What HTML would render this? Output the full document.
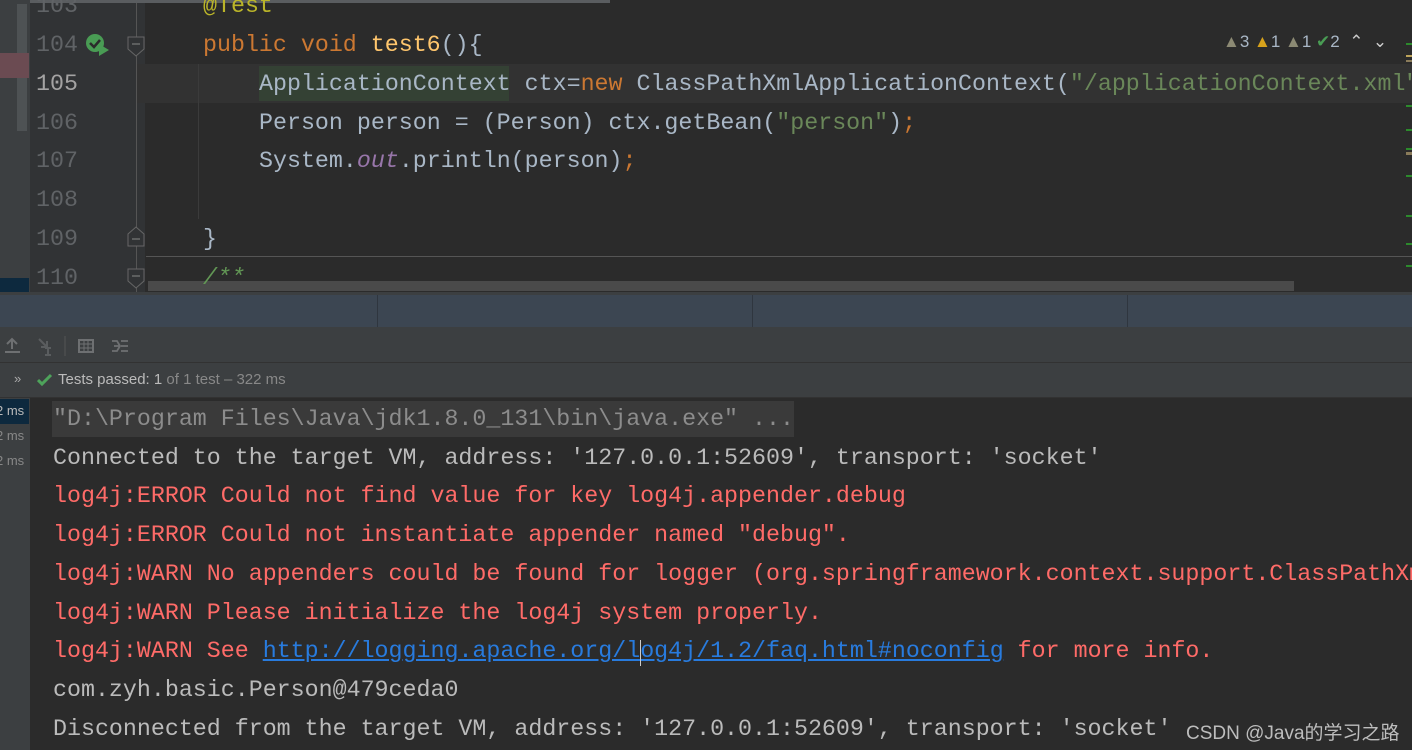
<!DOCTYPE html>
<html><head><meta charset="utf-8"><style>
*{margin:0;padding:0;box-sizing:border-box}
html,body{width:1412px;height:750px;overflow:hidden}
body{background:#2b2b2b;position:relative;font-family:"Liberation Mono",monospace;font-size:23.3px}
#w{position:absolute;left:0;top:0;width:1412px;height:750px;overflow:hidden}
.a{position:absolute;white-space:pre}
.ln{color:#606366;left:36px}
.k{color:#cc7832}.s{color:#6a8759}.t{color:#a9b7c6}.o{color:#9876aa;font-style:italic}.an{color:#bbb529}.c{color:#629755;font-style:italic}
.r{color:#ff6b68}.g{color:#bbbbbb}.u{color:#287bde;text-decoration:underline}
.ui{font-family:"Liberation Sans",sans-serif}
.clip{overflow:hidden;right:0}
</style></head><body><div id="w">
<!-- editor -->
<div class="a" style="left:0;top:0;width:30px;height:292px;background:#3c3f41"></div>
<div class="a" style="left:17px;top:4px;width:10px;height:127px;background:#4e5254"></div>
<div class="a" style="left:0;top:53px;width:29px;height:25px;background:#6b4b52"></div>
<div class="a" style="left:0;top:278px;width:29px;height:14px;background:#0d293e"></div>
<div class="a" style="left:30px;top:0;width:115px;height:292px;background:#313335"></div>
<div class="a" style="left:136px;top:0;width:1px;height:292px;background:#555"></div>
<div class="a" style="left:137px;top:64px;width:1275px;height:39px;background:#323232"></div>
<div class="a" style="left:259px;top:66px;width:250px;height:35px;background:#344134"></div>
<div class="a" style="left:198px;top:64px;width:1px;height:155px;background:#3b3b3b"></div>
<div class="a" style="left:146px;top:256px;width:1266px;height:1px;background:#555"></div>
<div class="a" style="left:148px;top:281px;width:1146px;height:10px;background:#4a4a4a"></div>
<div class="a" style="left:30px;top:0;width:580px;height:3px;background:#5a5d60"></div>
<div class="a ln" style="top:-13px;line-height:39px">103</div>
<div class="a ln" style="top:26px;line-height:39px">104</div>
<div class="a ln" style="top:65px;line-height:39px;color:#a4a3a3">105</div>
<div class="a ln" style="top:104px;line-height:39px">106</div>
<div class="a ln" style="top:142px;line-height:39px">107</div>
<div class="a ln" style="top:181px;line-height:39px">108</div>
<div class="a ln" style="top:220px;line-height:39px">109</div>
<div class="a ln" style="top:259px;line-height:39px">110</div>
<svg class="a" style="left:84px;top:32px" width="30" height="28"><circle cx="11" cy="11" r="9" fill="#499c54"/><path d="M6 11l4 4 6-7" stroke="#2b2b2b" stroke-width="2.5" fill="none"/><path d="M15 12l10 6-10 6z" fill="#499c54"/></svg>
<svg class="a" style="left:127px;top:36px" width="20" height="22"><path d="M1 1h16v12l-8 7-8-7z" fill="#313335" stroke="#666"/><path d="M5 8h8" stroke="#888"/></svg>
<svg class="a" style="left:127px;top:226px" width="20" height="22"><path d="M1 20h16v-12l-8-7-8 7z" fill="#313335" stroke="#666"/><path d="M5 13h8" stroke="#888"/></svg>
<svg class="a" style="left:127px;top:268px" width="20" height="22"><path d="M1 1h16v12l-8 7-8-7z" fill="#313335" stroke="#666"/><path d="M5 8h8" stroke="#888"/></svg>
<div class="a an" style="left:203px;top:-13px;line-height:39px">@Test</div>
<div class="a" style="left:203px;top:26px;line-height:39px"><span class="k">public void </span><span style="color:#ffc66d">test6</span><span class="t">(){</span></div>
<div class="a t clip" style="left:259px;top:65px;line-height:39px">ApplicationContext ctx=<span class="k">new </span>ClassPathXmlApplicationContext(<span class="s">"/applicationContext.xml"</span>);</div>
<div class="a t" style="left:259px;top:104px;line-height:39px">Person person = (Person) ctx.getBean(<span class="s">"person"</span>)<span class="k">;</span></div>
<div class="a t" style="left:259px;top:142px;line-height:39px">System.<span class="o">out</span>.println(person)<span class="k">;</span></div>
<div class="a t" style="left:203px;top:220px;line-height:39px">}</div>
<div class="a c" style="left:203px;top:259px;line-height:39px">/**</div>
<div class="a" style="left:1406px;top:43px;width:6px;height:2px;background:#2c8a2c"></div>
<div class="a" style="left:1406px;top:55px;width:6px;height:2px;background:#bca35a"></div>
<div class="a" style="left:1406px;top:60px;width:6px;height:2px;background:#8a7b5a"></div>
<div class="a" style="left:1406px;top:105px;width:6px;height:2px;background:#2c8a2c"></div>
<div class="a" style="left:1406px;top:129px;width:6px;height:2px;background:#2c8a2c"></div>
<div class="a" style="left:1406px;top:148px;width:6px;height:2px;background:#2c8a2c"></div>
<div class="a" style="left:1406px;top:152px;width:6px;height:3px;background:#8a7b5a"></div>
<div class="a" style="left:1406px;top:175px;width:6px;height:2px;background:#2c8a2c"></div>
<div class="a" style="left:1406px;top:215px;width:6px;height:2px;background:#2c8a2c"></div>
<div class="a" style="left:1406px;top:243px;width:6px;height:2px;background:#2c8a2c"></div>
<div class="a" style="left:1406px;top:265px;width:6px;height:2px;background:#2c8a2c"></div>
<div class="a ui" style="left:1223px;top:9px;font-size:17px;color:#a9b7c6;line-height:22px">
<span style="color:#8c8a74">▲</span>3 <span style="color:#d7a21b">▲</span>1 <span style="color:#8c8a74">▲</span>1 <span style="color:#499c54">✔</span>2 &nbsp;<span style="color:#ccc">⌃</span> &nbsp;<span style="color:#ccc">⌄</span></div>
<!-- panel header -->
<div class="a" style="left:0;top:292px;width:1412px;height:3px;background:#3c3f41"></div>
<div class="a" style="left:0;top:295px;width:1412px;height:32px;background:#3c4652"></div>
<div class="a" style="left:377px;top:295px;width:1px;height:32px;background:#2f363f"></div>
<div class="a" style="left:752px;top:295px;width:1px;height:32px;background:#2f363f"></div>
<div class="a" style="left:1127px;top:295px;width:1px;height:32px;background:#2f363f"></div>
<div class="a" style="left:0;top:327px;width:1412px;height:71px;background:#3c3f41"></div>
<div class="a" style="left:0;top:362px;width:1412px;height:1px;background:#323232"></div>
<div class="a" style="left:0;top:397px;width:1412px;height:1px;background:#323232"></div>
<svg class="a" style="left:2px;top:336px" width="140" height="20"><path d="M10 3v10M5 8l5-5 5 5M3 16h15" stroke="#6e7072" stroke-width="2" fill="none"/><path d="M37 3l8 8M45 5v6h-6M46 12v7M43 12h6M43 19h6" stroke="#5a5d5f" stroke-width="2" fill="none"/><path d="M63 0v20" stroke="#555"/><rect x="77" y="4" width="14" height="12" fill="none" stroke="#6e7072" stroke-width="2"/><path d="M77 8h14M77 12h14M82 4v12M86 4v12" stroke="#6e7072"/><path d="M110 5h5l3 5-3 5h-5M119 5h7M119 10h7M119 15h7M112 10h5" stroke="#6e7072" stroke-width="1.8" fill="none"/></svg>
<div class="a ui" style="left:14px;top:371px;font-size:13px;color:#aaa">»</div>
<svg class="a" style="left:37px;top:373px" width="16" height="14"><path d="M1 7l4 4 9-9" stroke="#4ea35b" stroke-width="3" fill="none"/></svg>
<div class="a ui" style="left:58px;top:371px;font-size:15px;color:#bbbbbb">Tests passed: 1 <span style="color:#888">of 1 test – 322 ms</span></div>
<!-- console -->
<div class="a" style="left:0;top:398px;width:30px;height:352px;background:#3c3f41"></div>
<div class="a" style="left:0;top:399px;width:29px;height:25px;background:#0d293e"></div>
<div class="a ui" style="left:-4px;top:403px;font-size:13px;color:#bbb">2 ms</div>
<div class="a ui" style="left:-4px;top:428px;font-size:13px;color:#888">2 ms</div>
<div class="a ui" style="left:-4px;top:453px;font-size:13px;color:#888">2 ms</div>
<div class="a" style="left:52px;top:401px;width:742px;height:36px;background:#3a3a3a"></div>
<div class="a" style="left:53px;top:400px;line-height:39px;color:#8c8c8c">"D:\Program Files\Java\jdk1.8.0_131\bin\java.exe" ...</div>
<div class="a g" style="left:53px;top:439px;line-height:39px">Connected to the target VM, address: '127.0.0.1:52609', transport: 'socket'</div>
<div class="a r" style="left:53px;top:477px;line-height:39px">log4j:ERROR Could not find value for key log4j.appender.debug</div>
<div class="a r" style="left:53px;top:516px;line-height:39px">log4j:ERROR Could not instantiate appender named "debug".</div>
<div class="a r clip" style="left:53px;top:555px;line-height:39px">log4j:WARN No appenders could be found for logger (org.springframework.context.support.ClassPathXmlApplicationContext).</div>
<div class="a r" style="left:53px;top:594px;line-height:39px">log4j:WARN Please initialize the log4j system properly.</div>
<div class="a r" style="left:53px;top:632px;line-height:39px">log4j:WARN See <span class="u">http://logging.apache.org/log4j/1.2/faq.html#noconfig</span> for more info.</div>
<div class="a g" style="left:53px;top:671px;line-height:39px">com.zyh.basic.Person@479ceda0</div>
<div class="a g" style="left:53px;top:710px;line-height:39px">Disconnected from the target VM, address: '127.0.0.1:52609', transport: 'socket'</div>
<div class="a" style="left:640px;top:640px;width:1px;height:26px;background:#ccc"></div>
<div class="a" style="left:1178px;top:712px;width:234px;height:36px;background:#2b2b2b"></div>
<div class="a" style="left:1186px;top:718px;font-family:'Liberation Sans','Noto Sans CJK SC',sans-serif;font-size:19px;color:#bdbdbd">CSDN @Java的学习之路</div>
</div></body></html>
